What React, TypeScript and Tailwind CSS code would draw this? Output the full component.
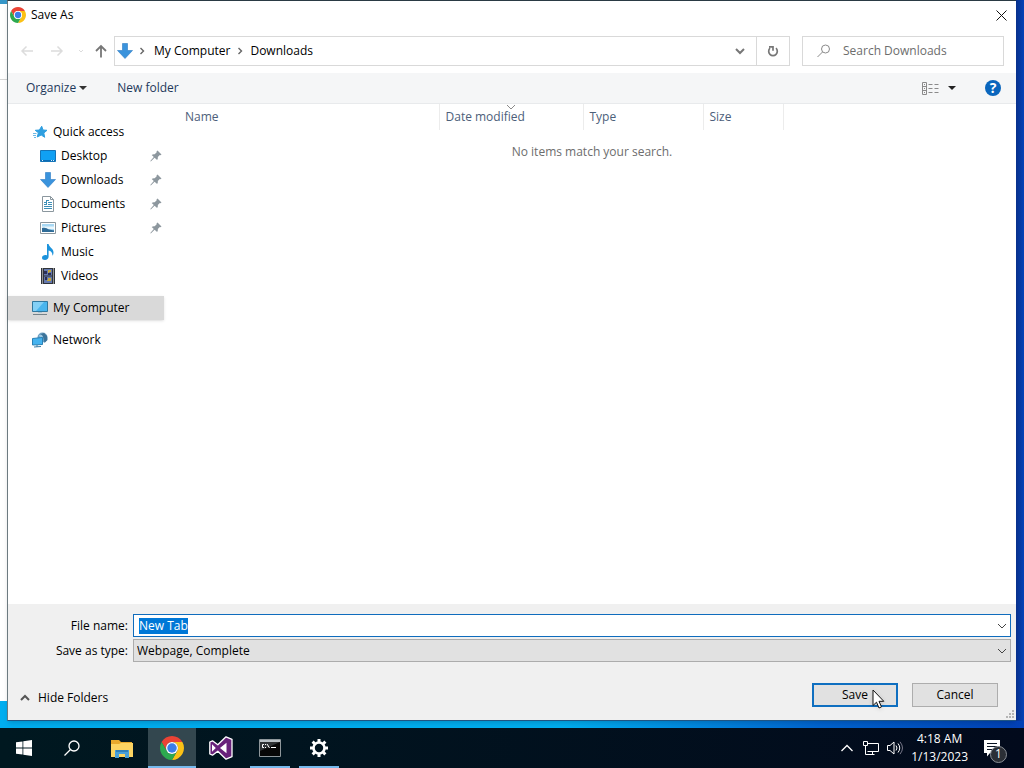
import { useEffect, useRef, useState } from 'react';
import type { ReactNode } from 'react';

function ChromeIcon({ className }: { className: string }) {
  return (
    <svg viewBox="2 2 44 44" className={className} aria-hidden="true">
      <path fill="#ea4335" d="M4.95 13A22 22 0 0 1 43.05 13H24A11 11 0 0 0 14.47 29.5Z" />
      <path fill="#fbc116" d="M43.05 13A22 22 0 0 1 24 46L33.53 29.5A11 11 0 0 0 24 13Z" />
      <path fill="#2da94f" d="M24 46A22 22 0 0 1 4.95 13L14.47 29.5A11 11 0 0 0 33.53 29.5Z" />
      <circle cx="24" cy="24" r="11" fill="#fff" />
      <circle cx="24" cy="24" r="8.7" fill="#3b7de9" />
    </svg>
  );
}

function DownArrowIcon() {
  return (
    <svg viewBox="0 0 16 16" className="size-4 shrink-0" aria-hidden="true">
      <path fill="#3a93dc" stroke="#2a7bc4" strokeWidth=".6" d="M5.5.5h5v7h5L8 15.5.5 7.5h5z" />
    </svg>
  );
}

function Chevron({ d, className }: { d: string; className: string }) {
  return (
    <svg viewBox="0 0 10 10" className={className} fill="none" stroke="currentColor" aria-hidden="true">
      <path d={d} />
    </svg>
  );
}

const DOWN = 'M1 3l4 4 4-4';
const UP = 'M1 7l4-4 4 4';
const RIGHT = 'M3.5 2L6.5 5 3.5 8';

const icons: Record<string, ReactNode> = {
  star: (
    <svg viewBox="0 0 16 16" className="size-4 shrink-0" aria-hidden="true">
      <path fill="#2f9fe0" stroke="#2f9fe0" strokeLinejoin="round" d="M9.7 2.2l1.300 3.800 4 .3-3.200 2.700.9 4.300-3.500-2.300-4 2 1.200-4.200-3.200-2.500 4.200-.3z" />
      <path stroke="#6db9e6" d="M1 9.5h3.500M1 11.500h3M2 13.500h2" />
    </svg>
  ),
  desktop: (
    <svg viewBox="0 0 16 16" className="size-4 shrink-0" aria-hidden="true">
      <path fill="#10a0f3" stroke="#1474b8" d="M.5 2.500h15v11H.5z" />
      <path stroke="#0b6cb5" d="M1 12.500h14" />
      <path stroke="#d5efff" d="M2 12.500h1M11 12.500h1M13 12.500h1" />
    </svg>
  ),
  downloads: <DownArrowIcon />,
  documents: (
    <svg viewBox="0 0 16 16" className="size-4 shrink-0" fill="none" aria-hidden="true">
      <path fill="#fff" stroke="#8b979e" d="M2.500.5h8l3 3v12h-11z" />
      <path stroke="#8b979e" d="M10.500.5v3h3" />
      <path stroke="#3c8fb8" d="M6 4.500h3M4 6.500h3M8 6.500h4M4 8.500h3M8 8.500h4M4 10.500h8M4 12.500h8" />
      <path stroke="#3c8fb8" d="M6.500 4v5" />
    </svg>
  ),
  pictures: (
    <svg viewBox="0 0 16 16" className="size-4 shrink-0" aria-hidden="true">
      <path fill="#fff" stroke="#8b979e" d="M.5 2.500h15v11H.5z" />
      <path fill="#a8d8f4" d="M2 4h12v8H2z" />
      <path fill="#e9f6fc" d="M2 6.500h12v2.500H2z" />
      <path fill="#2f6c98" d="M2 8c3-1 5 .2 7 1.500 2 .6 3.500.5 5 .8V12H2z" />
    </svg>
  ),
  music: (
    <svg viewBox="0 0 16 16" className="size-4 shrink-0" aria-hidden="true">
      <path fill="#1c93dc" d="M7 0h1.600c.3 3.200 4.900 4.400 4.900 8.400 0 1.500-.5 2.700-1.200 3.700.6-2.900-1.100-4.900-3.700-5.500v6.200C8.600 14.700 7 16 5 16s-3-1-3-2.300C2 12 3.700 11 5.300 11c.7 0 1.300.2 1.700.4z" />
    </svg>
  ),
  videos: (
    <svg viewBox="0 0 16 16" className="size-4 shrink-0" aria-hidden="true">
      <path fill="#30343a" d="M1 0h14v16H1z" />
      <path stroke="#f4f4f4" strokeDasharray="1 1" d="M2.500.5V16M13.500.5V16" />
      <path fill="#6478ad" d="M4 1h8v6.500H4zM4 8.500h8V15H4z" />
      <path fill="#c2a63a" d="M8 2h3v2H9v1H8zM8 10h3v3H7v-1h1z" />
      <path fill="#2b2f55" d="M4 3h3v3H4zM5 9h2v3H5zM8 5h3v2H8z" />
    </svg>
  ),
  computer: (
    <svg viewBox="0 0 16 16" className="size-4 shrink-0" aria-hidden="true">
      <path fill="#49b5ee" stroke="#31789f" d="M.5 1.500h15v10H.5z" />
      <path fill="#83d0f6" d="M1 2h11L4 11H1z" />
      <path stroke="#76838a" d="M1 14.500h14" />
      <path stroke="#a9c6d6" d="M6 12.500h4" />
    </svg>
  ),
  network: (
    <svg viewBox="0 0 16 16" className="size-4 shrink-0" aria-hidden="true">
      <circle cx="10.500" cy="5.500" r="5" fill="#6c9fc2" />
      <path fill="#3c7399" d="M9 2l3-1 3 3 .5 4-3 3-1-5z" />
      <path fill="#9fc9e3" d="M7 3l3 0 1 2-3 1z" />
      <path fill="#45b3ef" stroke="#2980b5" d="M.5 6.500l10-1v7l-10 .5z" />
      <path stroke="#3d7ea6" d="M2 15l7-.5M5 13v2" />
    </svg>
  ),
};

function PinIcon() {
  return (
    <svg viewBox="0 0 12 12" className="size-3" aria-hidden="true">
      <path fill="#8d979e" d="M7.500.5l4 4-1 .8-.7-.2-2 2c.2 1.200 0 2.200-.7 3L4.600 7.800.8 11.500l-.5-.5L3.800 7 1.700 4.900c.8-.7 1.900-.9 3-.7l2-2L6.600 1.300z" />
    </svg>
  );
}

const quickAccess = [
  { icon: 'desktop', label: 'Desktop', pinned: true },
  { icon: 'downloads', label: 'Downloads', pinned: true },
  { icon: 'documents', label: 'Documents', pinned: true },
  { icon: 'pictures', label: 'Pictures', pinned: true },
  { icon: 'music', label: 'Music', pinned: false },
  { icon: 'videos', label: 'Videos', pinned: false },
];

function Sidebar() {
  return (
    <nav aria-label="Folders" className="flex w-39 shrink-0 flex-col gap-2 pt-4">
      <ul>
        <li>
          <button type="button" className="flex h-6 w-full items-center gap-[5px] pl-6">
            {icons.star}
            Quick access
          </button>
        </li>
        {quickAccess.map((item) => (
          <li key={item.label}>
            <button type="button" className="flex h-6 w-full items-center gap-[5px] pr-0.5 pl-8">
              {icons[item.icon]}
              <span className="flex-1 text-left">{item.label}</span>
              {item.pinned && <PinIcon />}
            </button>
          </li>
        ))}
      </ul>
      <button type="button" className="flex h-6 w-full items-center gap-[5px] bg-[#d9d9d9] pl-6 shadow-sm">
        {icons.computer}
        My Computer
      </button>
      <button type="button" className="flex h-6 w-full items-center gap-[5px] pl-6">
        {icons.network}
        Network
      </button>
    </nav>
  );
}

function NavBar() {
  return (
    <div className="flex h-[42px] items-start pt-[5px] pr-3">
      <div className="flex h-[30px] w-[106px] shrink-0 items-center pl-3 text-[#dcdcdc]">
        <button type="button" aria-label="Back" disabled>
          <svg viewBox="0 0 14 14" className="size-3.5" fill="none" stroke="currentColor" strokeWidth="1.500"><path d="M13 7H2M6.500 2.500L2 7l4.500 4.500" /></svg>
        </button>
        <button type="button" aria-label="Forward" disabled className="ml-4">
          <svg viewBox="0 0 14 14" className="size-3.5" fill="none" stroke="currentColor" strokeWidth="1.500"><path d="M1 7h11M7.500 2.500L12 7l-4.500 4.500" /></svg>
        </button>
        <button type="button" aria-label="Recent locations" disabled className="ml-3">
          <Chevron d="M3 4l2 2 2-2" className="size-2.5" />
        </button>
        <button type="button" aria-label="Up" className="ml-2 text-[#777]">
          <svg viewBox="0 0 14 14" className="size-3.5" fill="none" stroke="currentColor" strokeWidth="1.800"><path d="M7 13.500V2M2 7l5-5 5 5" /></svg>
        </button>
      </div>
      <div className="flex h-[30px] flex-1 items-center border border-[#d9d9d9] bg-white pl-0.5">
        <DownArrowIcon />
        <Chevron d={RIGHT} className="ml-1 size-2.5 stroke-[1.4] text-[#666]" />
        <button type="button" className="ml-[7px]">My Computer</button>
        <Chevron d={RIGHT} className="mx-[5px] size-2.5 stroke-[1.4] text-[#666]" />
        <button type="button">Downloads</button>
        <button type="button" aria-label="Previous locations" className="ml-auto flex w-8 justify-center text-[#777]">
          <Chevron d={DOWN} className="size-2.5 stroke-2" />
        </button>
        <button type="button" aria-label="Refresh" className="flex h-full w-[33px] items-center justify-center border-l border-[#d9d9d9] text-[#777]">
          <svg viewBox="0 0 12 12" className="size-3" fill="none" stroke="currentColor" strokeWidth="1.700"><path d="M9 3.200A4.300 4.300 0 1 1 3 3.200M2 1.800h4v4" /></svg>
        </button>
      </div>
      <label className="ml-3 flex h-[30px] w-[202px] items-center gap-3 border border-[#d9d9d9] bg-white pl-3.5">
        <svg viewBox="0 0 14 14" className="size-3.5 shrink-0" fill="none" stroke="#8a8a8a"><circle cx="8.500" cy="5" r="4" /><path d="M5.500 8L.5 13" /></svg>
        <input type="search" aria-label="Search Downloads" placeholder="Search Downloads" className="w-full min-w-0 outline-none placeholder:text-[#6d6d6d]" />
      </label>
    </div>
  );
}

function Toolbar() {
  return (
    <div className="flex h-[31px] items-center border-b border-[#e8eaec] bg-[#f5f6f7] pr-[15px] pl-[18px] text-[#1e395b]">
      <button type="button" className="flex items-center gap-[3px]">
        Organize
        <svg viewBox="0 0 8 4" className="h-1 w-2" fill="#333"><path d="M0 0h8L4 4z" /></svg>
      </button>
      <button type="button" className="ml-7.5">New folder</button>
      <button type="button" aria-label="Change your view" className="ml-auto flex items-center gap-2">
        <svg viewBox="0 0 18 13" className="h-[13px] w-[18px]" fill="none" stroke="#8a8a8a">
          <path d="M.5.5h4v12h-4zM.5 4.500h4M.5 8.500h4" />
          <path d="M2 2.500h1M2 6.500h1M2 10.500h1" />
          <path d="M6.500 2.500h4M12.500 2.500h4M6.500 6.500h4M12.500 6.500h4M6.500 10.500h4M12.500 10.500h4" />
        </svg>
        <svg viewBox="0 0 8 4" className="h-1 w-2" fill="#222"><path d="M0 0h8L4 4z" /></svg>
      </button>
      <button type="button" aria-label="Help" className="ml-[29px] flex size-4 items-center justify-center rounded-full bg-[#0a66bd] text-sm font-bold text-white">
        ?
      </button>
    </div>
  );
}

function FileList() {
  return (
    <div className="ml-1 min-w-0 flex-1">
      <table className="w-full table-fixed text-left">
        <colgroup>
          <col className="w-[271px]" />
          <col className="w-36" />
          <col className="w-30" />
          <col className="w-20" />
          <col />
        </colgroup>
        <thead className="text-[#4c607a]">
          <tr className="h-[26px]">
            <th className="border-r border-[#ececec] pl-[17px] font-normal">Name</th>
            <th className="relative border-r border-[#ececec] pl-1.5 font-normal">
              Date modified
              <Chevron d={DOWN} className="absolute inset-x-0 -top-0.5 mx-auto size-2.5 text-[#8a8a8a]" />
            </th>
            <th className="border-r border-[#ececec] pl-1.5 font-normal">Type</th>
            <th className="border-r border-[#ececec] pl-1.5 font-normal">Size</th>
            <td />
          </tr>
        </thead>
        <tbody>
          <tr>
            <td colSpan={5} className="pt-3.5 text-center text-[#6d6d6d]">No items match your search.</td>
          </tr>
        </tbody>
      </table>
    </div>
  );
}

function SaveForm() {
  const [name, setName] = useState('New Tab');
  const inputRef = useRef<HTMLInputElement>(null);

  useEffect(() => {
    inputRef.current?.focus();
    inputRef.current?.select();
  }, []);

  return (
    <form className="bg-[#f0f0f0] pt-2.5" onSubmit={(e) => e.preventDefault()}>
      <div className="grid grid-cols-[120px_1fr] items-center gap-x-[5px] gap-y-0.5 pr-[5px]">
        <label htmlFor="file-name" className="text-right">File name:</label>
        <div className="flex h-[23px] items-center border border-[#0f6cbd] bg-white pr-[3px] pl-[5px]">
          <input
            id="file-name"
            ref={inputRef}
            value={name}
            onChange={(e) => setName(e.target.value)}
            className="min-w-0 flex-1 leading-4 outline-none selection:bg-[#0078d7] selection:text-white"
          />
          <Chevron d={DOWN} className="size-2.5 text-[#444]" />
        </div>
        <label htmlFor="save-type" className="text-right">Save as type:</label>
        <div className="relative h-[23px] border border-[#acacac] bg-[#e1e1e1]">
          <select id="save-type" className="h-full w-full appearance-none pl-[3px] outline-none">
            <option>Webpage, Complete</option>
          </select>
          <Chevron d={DOWN} className="pointer-events-none absolute top-1.5 right-[3px] size-2.5 text-[#444]" />
        </div>
      </div>
      <div className="mt-5 flex h-[38px] items-start pr-[18px] pl-3">
        <button type="button" className="mt-2 flex items-center gap-2">
          <Chevron d={UP} className="size-2.5 stroke-2 text-[#555]" />
          Hide Folders
        </button>
        <button type="submit" className="relative mt-px ml-auto h-6 w-[86px] border-2 border-[#0f6fc0] bg-[#e1e1e1]">
          Save
          {/* mouse pointer resting on the default button */}
          <svg viewBox="0 0 13 20" className="absolute top-1 left-[58px] h-5 w-[13px] drop-shadow-sm" aria-hidden="true">
            <path fill="#fff" stroke="#111" d="M1 1v15.500l3.500-3.300 2.500 5.800 2.500-1.100L7 12.300h4.800z" />
          </svg>
        </button>
        <button type="button" className="mt-px ml-3.5 h-6 w-[86px] border border-[#adadad] bg-[#e1e1e1]">Cancel</button>
      </div>
      <div className="flex justify-end pr-0.5">
        <svg viewBox="0 0 8 8" className="-mt-2.5 mb-0.5 size-2" fill="#b5b5b5" aria-hidden="true">
          <path d="M6 0h2v2H6zM3 3h2v2H3zM6 3h2v2H6zM0 6h2v2H0zM3 6h2v2H3zM6 6h2v2H6z" />
        </svg>
      </div>
    </form>
  );
}

function SaveDialog() {
  return (
    <section role="dialog" aria-label="Save As" className="flex min-w-0 flex-1 flex-col border-t border-b border-l border-t-[#2a3a44] border-b-[#1f5583] border-l-[#6c7a80] bg-white shadow-md">
      <header className="flex h-[30px] items-center gap-[5px] pr-[9px] pb-0.5 pl-0.5">
        <ChromeIcon className="size-4" />
        <h1>Save As</h1>
        <button type="button" aria-label="Close" className="ml-auto">
          <svg viewBox="0 0 11 11" className="size-[11px]" stroke="#111"><path d="M.5.5l10 10M10.500.5l-10 10" /></svg>
        </button>
      </header>
      <NavBar />
      <Toolbar />
      <div className="flex flex-1">
        <Sidebar />
        <FileList />
      </div>
      <SaveForm />
    </section>
  );
}

type TaskProps = { label: string; children: ReactNode };

function TaskButton({ label, children }: TaskProps) {
  return (
    <button type="button" aria-label={label} className="flex w-12 items-center justify-center">
      {children}
    </button>
  );
}

function RunningTask({ label, children }: TaskProps) {
  return (
    <button type="button" aria-label={label} className="flex w-12 justify-center px-1">
      <span className="flex w-10 items-center justify-center border-b-2 border-[#76b9ed] pt-0.5">{children}</span>
    </button>
  );
}

function Taskbar() {
  return (
    <footer className="flex h-10 bg-linear-to-r from-[#001820] to-[#020a1c] text-white">
      <div className="flex gap-0.5">
        <div className="flex">
          <TaskButton label="Start">
            <svg viewBox="0 0 16 16" className="size-4" fill="#fff"><path d="M0 2.300l6.500-.9v6.200H0zM7.300 1.300L16 0v7.600H7.300zM0 8.400h6.500v6.200L0 13.700zM7.300 8.400H16V16l-8.700-1.300z" /></svg>
          </TaskButton>
          <TaskButton label="Search">
            <svg viewBox="0 0 16 16" className="size-4" fill="none" stroke="#fff" strokeWidth="1.300"><circle cx="10" cy="6" r="5" /><path d="M6.500 9.500L.5 15.500" /></svg>
          </TaskButton>
        </div>
        <TaskButton label="File Explorer">
          <svg viewBox="0 0 22 18" className="mt-px h-[18px] w-[22px]">
            <path fill="#e8a92d" d="M0 0h8l2 2h11v5H0z" />
            <path fill="#fcd462" d="M0 4h8l2-1h12v14H0z" />
            <path fill="#4aa0d8" d="M4 10h14v8h-4v-4H8v4H4z" />
            <path fill="#2f7fb9" d="M5 10h12v2H5z" />
          </svg>
        </TaskButton>
        <div className="flex gap-px">
          <button type="button" aria-label="Google Chrome" className="flex w-12 items-center justify-center border-b-2 border-[#76b9ed] bg-[#33474f] pt-0.5">
            <ChromeIcon className="size-6" />
          </button>
          <TaskButton label="Visual Studio">
            <svg viewBox="0 0 24 24" className="size-6">
              <path fill="#68217a" stroke="#fff" strokeWidth="1.300" strokeLinejoin="round" d="M17 .8l6 2.500v17.400l-6 2.500-8.200-8L3.500 19.200.8 18V6l2.700-1.200 5.300 4z" />
              <path fill="#fff" d="M17.500 6.800v10.400L11 12zM3 8.200L6.800 12 3 15.800z" />
            </svg>
          </TaskButton>
          <RunningTask label="Command Prompt">
            <svg viewBox="0 0 22 18" className="h-[18px] w-[22px]" fill="none">
              <path fill="#070707" stroke="#8f979b" d="M.5.5h21v17H.5z" />
              <path fill="#b9c0c4" d="M1 1h20v2H1z" />
              <path fill="#303335" d="M1 3h20L1 12z" />
              <path stroke="#fff" d="M5 5.500H3.500v3H5M6.500 5v1M6.500 8v1M8 5l2.500 4M12 8.500h5" />
            </svg>
          </RunningTask>
          <RunningTask label="Settings">
            <svg viewBox="0 0 20 20" className="size-5" fill="none" stroke="#fff">
              <circle cx="10" cy="10" r="5.500" strokeWidth="2.600" />
              <path strokeWidth="3" d="M10 1v3M10 16v3M1 10h3M16 10h3M3.600 3.600l2.200 2.200M14.200 14.200l2.200 2.200M3.600 16.400l2.200-2.200M14.200 5.800l2.200-2.200" />
            </svg>
          </RunningTask>
        </div>
      </div>
      <div className="ml-auto flex items-center">
        <button type="button" aria-label="Show hidden icons">
          <svg viewBox="0 0 12 8" className="h-2 w-3" fill="none" stroke="#fff" strokeWidth="1.300"><path d="M.5 7L6 1.500 11.500 7" /></svg>
        </button>
        <button type="button" aria-label="Network" className="ml-2.5">
          <svg viewBox="0 0 16 14" className="h-3.5 w-4" fill="none" stroke="#fff">
            <path d="M5 2.500h10.500v8H4.500M.5.500h4v4h-4zM2.500 4.500v9h9M9.500 10.500v3" />
          </svg>
        </button>
        <button type="button" aria-label="Volume" className="ml-2">
          <svg viewBox="0 0 16 14" className="h-3.5 w-4" fill="none" stroke="#fff">
            <path d="M.5 4.500h2.500l4-3.500v12l-4-3.500H.5zM9 4.500q2 2.500 0 5M11 2.500q3.500 4.500 0 9" />
            <path stroke="#778" d="M13 .8q5 6.200 0 12.400" />
          </svg>
        </button>
        <time dateTime="2023-01-13T04:18" className="ml-2 text-center leading-[18px]">
          4:18 AM
          <br />
          1/13/2023
        </time>
        <button type="button" aria-label="Notifications, 1 new" className="relative mr-6 ml-4">
          <svg viewBox="0 0 16 17" className="h-[17px] w-4"><path fill="#fff" d="M0 0h16v13H6l-3 3.500V13H0z" /><path stroke="#0a1424" d="M3 3.500h10M3 6.500h10M3 9.500h7" /></svg>
          <span className="absolute top-1.5 left-1.5 flex size-[17px] items-center justify-center rounded-full border border-[#8a8f96] bg-[#2b2f36]">1</span>
        </button>
      </div>
    </footer>
  );
}

export default function App() {
  return (
    <div className="flex min-h-screen flex-col bg-[#04318f] font-['Open_Sans','Noto_Sans',sans-serif] text-xs text-black">
      <main className="flex flex-1 bg-linear-to-r from-[#00aef0] from-55% via-[#0064cf] via-80% to-[#0340b5] pb-[7px]">
        {/* edge of the browser window behind the dialog */}
        <div className="flex w-[7px] flex-col pb-5">
          <div className="h-20 border-t-4 border-b border-t-[#3596c8] border-b-[#d5d5d5] bg-white" />
          <div className="flex-1 bg-white" />
        </div>
        <SaveDialog />
        <div className="w-2 bg-linear-to-r from-[#08308c] to-[#0343b8]" />
      </main>
      <Taskbar />
    </div>
  );
}
